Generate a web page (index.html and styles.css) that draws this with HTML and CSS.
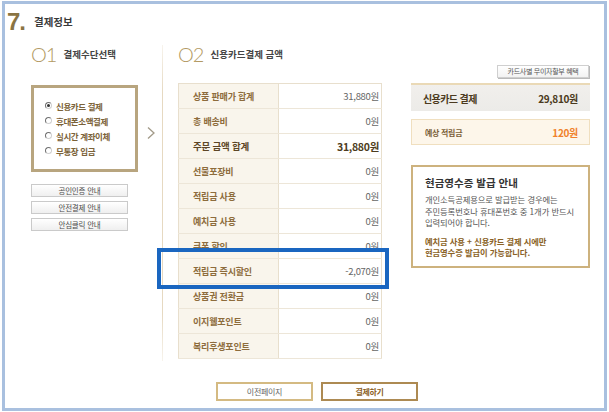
FILE: index.html
```html
<!DOCTYPE html>
<html lang="ko">

<head>
    <meta charset="UTF-8">
    <title>결제정보</title>
    <link rel="stylesheet" href="styles.css">
</head>

<body>
    <div class="frame">
        <h1 class="title"><span class="title-num">7.</span><span class="title-text">결제정보</span></h1>

        <div class="main">
            <div class="col-pay">
                <div class="step-head">
                    <span class="step-num">O1</span>
                    <span class="step-name">결제수단선택</span>
                </div>
                <div class="method-box">
                    <label class="method"><span class="radio checked"></span>신용카드 결제</label>
                    <label class="method"><span class="radio"></span>휴대폰소액결제</label>
                    <label class="method"><span class="radio"></span>실시간 계좌이체</label>
                    <label class="method"><span class="radio"></span>무통장 입금</label>
                </div>
                <div class="guide-buttons">
                    <a href="#" class="guide-btn">공인인증 안내</a>
                    <a href="#" class="guide-btn">안전결제 안내</a>
                    <a href="#" class="guide-btn">안심클릭 안내</a>
                </div>
            </div>

            <div class="arrow">
                <svg width="8" height="12" viewBox="0 0 8 12">
                    <polyline points="1,0.5 7,6 1,11.5" fill="none" stroke="#a29a88" stroke-width="1.3" />
                </svg>
            </div>

            <div class="divider"></div>

            <div class="col-amount">
                <div class="step-head">
                    <span class="step-num">O2</span>
                    <span class="step-name">신용카드결제 금액</span>
                </div>
                <table class="amount-table">
                    <tbody>
                        <tr>
                            <td class="label">상품 판매가 합계</td>
                            <td class="value">31,880원</td>
                        </tr>
                        <tr>
                            <td class="label">총 배송비</td>
                            <td class="value">0원</td>
                        </tr>
                        <tr class="total">
                            <td class="label">주문 금액 합계</td>
                            <td class="value">31,880원</td>
                        </tr>
                        <tr>
                            <td class="label">선물포장비</td>
                            <td class="value">0원</td>
                        </tr>
                        <tr>
                            <td class="label">적립금 사용</td>
                            <td class="value">0원</td>
                        </tr>
                        <tr>
                            <td class="label">예치금 사용</td>
                            <td class="value">0원</td>
                        </tr>
                        <tr>
                            <td class="label">쿠폰 할인</td>
                            <td class="value">0원</td>
                        </tr>
                        <tr>
                            <td class="label">적립금 즉시할인</td>
                            <td class="value">-2,070원</td>
                        </tr>
                        <tr>
                            <td class="label">상품권 전환금</td>
                            <td class="value">0원</td>
                        </tr>
                        <tr>
                            <td class="label">이지웰포인트</td>
                            <td class="value">0원</td>
                        </tr>
                        <tr>
                            <td class="label">복리후생포인트</td>
                            <td class="value">0원</td>
                        </tr>
                    </tbody>
                </table>
            </div>

            <div class="col-side">
                <div class="side-top">
                    <a href="#" class="small-btn">카드사별 무이자할부 혜택</a>
                </div>
                <div class="pay-total">
                    <span>신용카드 결제</span>
                    <strong>29,810원</strong>
                </div>
                <div class="point-box">
                    <span>예상 적립금</span>
                    <strong>120원</strong>
                </div>
                <div class="receipt">
                    <h2>현금영수증 발급 안내</h2>
                    <p>개인소득공제용으로 발급받는 경우에는<br>주민등록번호나 휴대폰번호 중 1개가 반드시<br>입력되어야 합니다.</p>
                    <p class="receipt-note">예치금 사용 + 신용카드 결제 시에만<br>현금영수증 발급이 가능합니다.</p>
                </div>
            </div>
        </div>

        <div class="actions">
            <a href="#" class="btn btn-prev">이전페이지</a>
            <a href="#" class="btn btn-pay">결제하기</a>
        </div>

        <!-- annotation box over the discount row -->
        <div class="highlight"></div>
    </div>
</body>

</html>
```

FILE: styles.css
```css
body {
    margin: 0;
    width: 609px;
    height: 412px;
    overflow: hidden;
    background-color: #ffffff;
    font-family: "Noto Sans CJK KR", "Noto Sans", sans-serif;
    color: #555555;
}

a {
    text-decoration: none;
}

.frame {
    position: relative;
    box-sizing: border-box;
    width: 605px;
    height: 410px;
    margin: 1px 0 0 2px;
    border: 3px solid #a9c0df; /* light blue window edge */
    background-color: #ffffff;
}

.title {
    display: flex;
    align-items: center;
    height: 24px;
    margin: 6px 0 0 0;
    padding-left: 2px;
}

.title-num {
    font-family: "Liberation Sans", Arial, sans-serif;
    font-size: 24px;
    font-weight: bold;
    line-height: 24px;
    color: #8a7443;
    letter-spacing: -1px;
}

.title-text {
    margin-left: 9px;
    font-size: 10.5px;
    font-weight: bold;
    line-height: 14px;
    color: #3a3a3a;
}

.main {
    display: flex;
    align-items: flex-start;
    margin-top: 10px;
    padding-left: 26px;
}

.step-head {
    display: flex;
    align-items: center;
    height: 20px;
}

.step-num {
    font-family: Lato, "Open Sans", sans-serif;
    font-size: 20px;
    font-weight: 300;
    line-height: 20px;
    color: #b39a63;
    letter-spacing: -1px;
}

.step-name {
    margin-left: 7px;
    font-size: 9.5px;
    font-weight: bold;
    line-height: 12px;
    color: #444444;
}

/* step 1 */
.col-pay {
    width: 107px;
}

.method-box {
    box-sizing: border-box;
    width: 107px;
    height: 87px;
    margin-top: 21px;
    padding: 10px 0 11px 11px;
    border: 3px solid #b8a57f;
}

.method {
    display: flex;
    align-items: center;
    height: 15px;
    font-size: 8.5px;
    font-weight: bold;
    color: #7b6238;
    letter-spacing: -0.4px;
}

.radio {
    position: relative;
    box-sizing: border-box;
    width: 7px;
    height: 7px;
    margin-right: 4px;
    border: 1px solid;
    border-color: #6f6f6f #d0d0d0 #d0d0d0 #6f6f6f;
    border-radius: 50%;
}

.radio.checked::after {
    content: "";
    position: absolute;
    top: 1px;
    left: 1px;
    width: 3px;
    height: 3px;
    border-radius: 50%;
    background-color: #333333;
}

.guide-buttons {
    display: flex;
    flex-direction: column;
    gap: 4px;
    margin-top: 12px;
}

.guide-btn {
    box-sizing: border-box;
    width: 97px;
    height: 13px;
    border: 1px solid #cacaca;
    background: linear-gradient(#ffffff, #efefef);
    font-size: 7.5px;
    line-height: 11px;
    text-align: center;
    color: #4d4d4d;
    letter-spacing: -0.2px;
}

.arrow {
    width: 8px;
    height: 12px;
    margin: 83px 0 0 9px;
}

.arrow svg {
    display: block;
}

.divider {
    width: 1px;
    height: 316px;
    margin: 1px 15px 0 7px;
    background: linear-gradient(to bottom, rgba(230, 217, 193, 0.3), #e6d9c1 15%, #e6d9c1 85%, rgba(230, 217, 193, 0.3));
}

/* step 2 */
.col-amount {
    width: 204px;
}

.amount-table {
    width: 204px;
    margin-top: 19px;
    border-collapse: collapse;
    border: 1px solid #e8dfcd;
}

.amount-table td {
    height: 24px;
    padding: 0;
    border-bottom: 1px solid #ede6d8;
}

.amount-table .label {
    width: 85px;
    padding-left: 14px;
    background-color: #f9f5ec;
    border-right: 1px solid #e8dfcd;
    font-size: 9px;
    font-weight: bold;
    color: #8d6c3c;
    letter-spacing: -0.2px;
}

.amount-table .value {
    padding-right: 2px;
    text-align: right;
    font-size: 9.5px;
    color: #666666;
    letter-spacing: -0.3px;
}

.amount-table .total .label {
    font-size: 9.5px;
    color: #5d4626;
}

.amount-table .total .value {
    font-size: 10.5px;
    font-weight: bold;
    color: #4d3c20;
}

/* side */
.col-side {
    width: 179px;
    margin-left: 29px;
}

.side-top {
    display: flex;
    justify-content: flex-end;
    margin-top: 21px;
}

.small-btn {
    box-sizing: border-box;
    width: 92px;
    height: 13px;
    margin-right: 1px;
    border: 1px solid #cfcfcf;
    box-shadow: 1px 1px 0 #b9b9b9;
    background: linear-gradient(#ffffff, #f2f2f2);
    font-size: 7px;
    line-height: 11px;
    text-align: center;
    color: #555555;
    letter-spacing: -0.3px;
}

.pay-total {
    box-sizing: border-box;
    display: flex;
    justify-content: space-between;
    align-items: center;
    height: 28px;
    margin-top: 5px;
    padding: 0 12px;
    border-top: 2px solid #ead9b6;
    background: linear-gradient(#f1efec, #ecebe8);
    color: #4b3a20;
}

.pay-total span {
    font-size: 10px;
    font-weight: bold;
    letter-spacing: -0.6px;
}

.pay-total strong {
    font-size: 10px;
    letter-spacing: -0.3px;
}

.point-box {
    box-sizing: border-box;
    display: flex;
    justify-content: space-between;
    align-items: center;
    height: 26px;
    margin-top: 8px;
    padding: 0 11px 0 13px;
    border: 1px solid #f0dfbf;
    background-color: #fdf6ea;
}

.point-box span {
    font-size: 8px;
    font-weight: bold;
    color: #7b6038;
    letter-spacing: -0.3px;
}

.point-box strong {
    font-size: 10px;
    color: #f0812c;
    letter-spacing: -0.3px;
}

.receipt {
    box-sizing: border-box;
    height: 103px;
    margin-top: 20px;
    padding: 9px 0 0 12px;
    border: 2px solid #cdb27e;
}

.receipt h2 {
    margin: 0;
    font-size: 10.5px;
    line-height: 14px;
    color: #333333;
}

.receipt p {
    margin: 4px 0 0 0;
    font-size: 8.3px;
    line-height: 11.5px;
    color: #555555;
    letter-spacing: -0.1px;
}

.receipt .receipt-note {
    margin-top: 7px;
    font-weight: bold;
    color: #8a6226;
}

/* bottom buttons */
.actions {
    display: flex;
    gap: 8px;
    margin-top: 21px;
    padding-left: 211px;
}

.btn {
    box-sizing: border-box;
    width: 97px;
    height: 19px;
    border: 2px solid #d4ba82;
    background-color: #ffffff;
    font-size: 8px;
    line-height: 15px;
    text-align: center;
    color: #666666;
    letter-spacing: -0.3px;
}

.btn-pay {
    border-color: #ad8a52;
    font-weight: bold;
    color: #8b5e24;
}

.highlight {
    position: absolute;
    top: 244px;
    left: 152px;
    box-sizing: border-box;
    width: 232px;
    height: 41px;
    border: 4px solid #1a66c0;
}
```
